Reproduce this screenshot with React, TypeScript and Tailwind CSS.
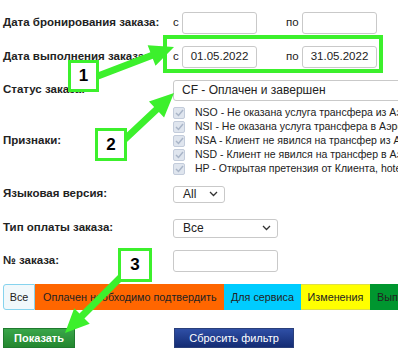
import React from 'react'

const GREEN = '#3cf02c'

type Pt = [number, number]

// polygon for a thick arrow from start to tip
const arrowPoints = (from: Pt, tip: Pt, shaft = 7, headLen = 24, headW = 22) => {
    const dx = tip[0] - from[0]
    const dy = tip[1] - from[1]
    const len = Math.hypot(dx, dy)
    const ux = dx / len
    const uy = dy / len
    const nx = -uy
    const ny = ux
    const bx = tip[0] - ux * headLen
    const by = tip[1] - uy * headLen
    const pts: Pt[] = [
        [from[0] + (nx * shaft) / 2, from[1] + (ny * shaft) / 2],
        [bx + (nx * shaft) / 2, by + (ny * shaft) / 2],
        [bx + (nx * headW) / 2, by + (ny * headW) / 2],
        tip,
        [bx - (nx * headW) / 2, by - (ny * headW) / 2],
        [bx - (nx * shaft) / 2, by - (ny * shaft) / 2],
        [from[0] - (nx * shaft) / 2, from[1] - (ny * shaft) / 2],
    ]
    return pts.map((p) => p.join(',')).join(' ')
}

const Chevron = () => (
    <svg width="9" height="6" viewBox="0 0 9 6" className="shrink-0">
        <polyline points="1,1 4.5,4.5 8,1" fill="none" stroke="#333" strokeWidth="1.3" />
    </svg>
)

const Check = () => (
    <span className="flex h-[12px] w-[12px] shrink-0 items-center justify-center rounded-[2px] border border-[#c3ccdb] bg-[#dfe5ee]">
        <svg width="9" height="8" viewBox="0 0 9 8">
            <polyline points="1,4 3.5,6.5 8,1" fill="none" stroke="#a9b5c8" strokeWidth="1.5" />
        </svg>
    </span>
)

const Label = ({ children }: { children: React.ReactNode }) => (
    <div className="w-[170px] shrink-0 text-[11.5px] font-bold text-[#222]">{children}</div>
)

const DateInput = ({ value }: { value?: string }) => (
    <div className="flex h-[22px] w-[75px] items-center justify-center rounded-[3px] border border-[#c9c9c9] bg-white text-[11.5px] text-[#222]">
        {value}
    </div>
)

const flags = [
    'NSO - Не оказана услуга трансфера из Аэропорта',
    'NSI - Не оказана услуга трансфера в Аэропорт',
    'NSA - Клиент не явился на трансфер из Аэропорта',
    'NSD - Клиент не явился на трансфер в Аэропорт',
    'HP - Открытая претензия от Клиента, hotel',
]

export default function App() {
    return (
        <div className="relative h-[361px] w-[398px] overflow-hidden bg-white font-['Liberation_Sans',Arial,sans-serif] text-[#222]">
            <div className="pl-[3px] pt-[6px]">
                <div className="flex h-[34px] items-center">
                    <Label>Дата бронирования заказа:</Label>
                    <span className="w-[9px] text-[11.5px]">с</span>
                    <DateInput />
                    <span className="ml-[29px] w-[16px] text-[11.5px]">по</span>
                    <DateInput />
                </div>
                <div className="flex h-[34px] items-center">
                    <Label>Дата выполнения заказа:</Label>
                    <span className="w-[9px] text-[11.5px]">с</span>
                    <DateInput value="01.05.2022" />
                    <span className="ml-[29px] w-[16px] text-[11.5px]">по</span>
                    <DateInput value="31.05.2022" />
                </div>
                <div className="flex h-[32px] items-center">
                    <Label>Статус заказа:</Label>
                    <div className="flex h-[21px] w-[260px] shrink-0 items-center rounded-[3px] border border-[#c9c9c9] bg-white pl-[8px] text-[12px]">
                        CF - Оплачен и завершен
                    </div>
                </div>
                <div className="flex h-[70px] items-center">
                    <Label>Признаки:</Label>
                    <div className="flex flex-col">
                        {flags.map((f) => (
                            <div key={f} className="flex h-[14px] items-center gap-[10px] whitespace-nowrap text-[10.5px]">
                                <Check />
                                <span>{f}</span>
                            </div>
                        ))}
                    </div>
                </div>
                <div className="flex h-[36px] items-center">
                    <Label>Языковая версия:</Label>
                    <div className="flex h-[17px] w-[52px] items-center justify-between rounded-[3px] border border-[#c9c9c9] bg-white pl-[9px] pr-[6px] text-[12px]">
                        All
                        <Chevron />
                    </div>
                </div>
                <div className="flex h-[32px] items-center">
                    <Label>Тип оплаты заказа:</Label>
                    <div className="flex h-[19px] w-[105px] items-center justify-between rounded-[3px] border border-[#c9c9c9] bg-white pl-[9px] pr-[6px] text-[12px]">
                        Все
                        <Chevron />
                    </div>
                </div>
                <div className="flex h-[34px] items-center">
                    <Label>№ заказа:</Label>
                    <div className="h-[22px] w-[105px] rounded-[3px] border border-[#c9c9c9] bg-white" />
                </div>

                <div className="mt-[6px] flex h-[26px] whitespace-nowrap text-[10.8px] text-[#222]">
                    <div className="flex w-[32px] shrink-0 items-center justify-center rounded-l-[3px] border border-[#86d3ee] bg-[#f1f8fb]">
                        Все
                    </div>
                    <div className="flex w-[189px] shrink-0 items-center pl-[8px] bg-[#ff6600]">
                        Оплачен необходимо подтвердить
                    </div>
                    <div className="flex w-[77px] shrink-0 items-center justify-center bg-[#00ccff]">
                        Для сервиса
                    </div>
                    <div className="flex w-[69px] shrink-0 items-center justify-center border-y border-[#dede44] bg-[#ffff00]">
                        Изменения
                    </div>
                    <div className="flex w-[80px] shrink-0 items-center pl-[7px] bg-[#00962f]">
                        Выполнен
                    </div>
                </div>

                <div className="mt-[18px] flex items-center">
                    <button className="flex h-[20px] w-[72px] items-center justify-center border border-[#1f7a2e] bg-gradient-to-b from-[#3aa64a] to-[#23872f] text-[11px] font-bold text-white">
                        Показать
                    </button>
                    <button className="ml-[99px] flex h-[20px] w-[120px] items-center justify-center border border-[#2a3f7a] bg-gradient-to-b from-[#2f4fa6] to-[#142c74] text-[11px] text-white">
                        Сбросить фильтр
                    </button>
                </div>
            </div>

            {/* annotation overlay */}
            <div className="absolute left-[163px] top-[35px] h-[38px] w-[220px] border-[4px] border-[#3cf02c]" />
            <svg className="pointer-events-none absolute inset-0" width="398" height="361">
                <polygon points={arrowPoints([98, 76], [174, 47])} fill={GREEN} />
                <polygon points={arrowPoints([124, 140], [174, 93])} fill={GREEN} />
                <polygon points={arrowPoints([122, 276], [65, 333])} fill={GREEN} />
            </svg>
            <div className="absolute left-[68px] top-[60px] flex h-[32px] w-[31px] items-center justify-center border-[3px] border-[#3cf02c] bg-white text-[17px] font-bold text-black">
                1
            </div>
            <div className="absolute left-[95px] top-[128px] flex h-[33px] w-[32px] items-center justify-center border-[3px] border-[#3cf02c] bg-white text-[17px] font-bold text-black">
                2
            </div>
            <div className="absolute left-[118px] top-[248px] flex h-[34px] w-[34px] items-center justify-center border-[3px] border-[#3cf02c] bg-white text-[17px] font-bold text-black">
                3
            </div>
        </div>
    )
}
